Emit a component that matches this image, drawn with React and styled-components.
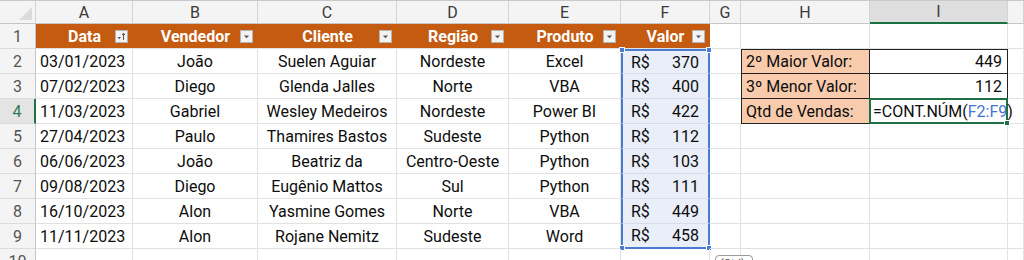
import styled, { createGlobalStyle } from "styled-components";

const GlobalStyle = createGlobalStyle`
  html, body {
    margin: 0;
    padding: 0;
    background: #fff;
    overflow: hidden;
  }
  body {
    font-family: Roboto, "Liberation Sans", Arial, sans-serif;
    font-size: 16px;
    color: #0d0d0d;
  }
`;

const ORANGE = "#c55a11";
const PEACH = "#f8cbad";
const BLUE = "#4a7bcf";
const GREEN = "#1e7145";
const GRID = "#e1e1e1";

const Sheet = styled.div`
  position: relative;
  display: grid;
  grid-template-columns: 36px 97px 125px 139px 112px 112px 89px 31px 129px 138px 16px;
  grid-template-rows: 23px repeat(10, 25px);
  width: 1024px;
  height: 260px;
  overflow: hidden;
  border-top: 1px solid #c9c9c9;
  box-sizing: border-box;
`;

const Corner = styled.div`
  position: relative;
  background: #f4f4f4;
  border-right: 1px solid #d4d4d4;
  border-bottom: 1px solid #c6c6c6;
  &::after {
    content: "";
    position: absolute;
    right: 3px;
    bottom: 3px;
    border-left: 13px solid transparent;
    border-bottom: 13px solid #dcdcdc;
  }
`;

const ColHead = styled.div`
  display: flex;
  align-items: center;
  justify-content: center;
  background: ${({ $active }) => ($active ? "#dedede" : "#f4f4f4")};
  color: #3a3a3a;
  font-size: 16px;
  border-right: 1px solid #d4d4d4;
  border-bottom: ${({ $active }) => ($active ? `2px solid ${GREEN}` : "1px solid #c6c6c6")};
  box-sizing: border-box;
`;

const RowHead = styled.div`
  display: flex;
  align-items: center;
  justify-content: center;
  background: ${({ $active }) => ($active ? "#e4e4e4" : "#f4f4f4")};
  color: ${({ $active }) => ($active ? "#2f7a50" : "#555")};
  font-size: 16px;
  border-bottom: 1px solid #dcdcdc;
  border-right: ${({ $active }) => ($active ? `2px solid ${GREEN}` : "1px solid #c6c6c6")};
  box-sizing: border-box;
`;

const Cell = styled.div`
  position: relative;
  display: flex;
  align-items: center;
  justify-content: ${({ $align }) => $align || "center"};
  padding: 0 4px;
  white-space: nowrap;
  border-right: ${({ $open }) => ($open ? "none" : `1px solid ${GRID}`)};
  border-bottom: 1px solid ${GRID};
  box-sizing: border-box;
`;

const HeadCell = styled.div`
  display: grid;
  grid-template-columns: 18px 1fr 18px;
  align-items: center;
  background: ${ORANGE};
  color: #fff;
  font-weight: 700;
  border-bottom: 1px solid ${GRID};
  box-sizing: border-box;
`;

const HeadLabel = styled.span`
  text-align: center;
  white-space: nowrap;
`;

const FilterBtn = styled.span`
  width: 13px;
  height: 13px;
  display: flex;
  align-items: center;
  justify-content: center;
  background: #f3f3f3;
  border: 1px solid #b5b5b5;
  box-sizing: border-box;
`;

const ValueCell = styled.div`
  position: relative;
  display: flex;
  align-items: center;
  justify-content: space-between;
  padding: 0 9px 0 8px;
  background: #e9eef8;
  border-left: 2px solid ${BLUE};
  border-right: 2px solid ${BLUE};
  border-top: ${({ $first }) => ($first ? `2px solid ${BLUE}` : "none")};
  border-bottom: ${({ $last }) => ($last ? `2px solid ${BLUE}` : "1px solid #d7dde8")};
  box-sizing: border-box;
`;

const Handle = styled.span`
  position: absolute;
  width: 6px;
  height: 6px;
  background: ${({ $color }) => $color};
  border: 1px solid #fff;
  box-sizing: border-box;
  ${({ $top }) => ($top ? "top: -4px;" : "bottom: -4px;")}
  ${({ $left }) => ($left ? "left: -4px;" : "right: -4px;")}
`;

const LabelCell = styled.div`
  display: flex;
  align-items: center;
  padding: 0 4px;
  background: ${PEACH};
  white-space: nowrap;
  border-left: 1px solid #222;
  border-right: 1px solid #222;
  border-bottom: 1px solid #222;
  border-top: ${({ $first }) => ($first ? "1px solid #222" : "none")};
  box-sizing: border-box;
`;

const ResultCell = styled.div`
  display: flex;
  align-items: center;
  justify-content: flex-end;
  padding: 0 5px;
  border-right: 1px solid #222;
  border-bottom: 1px solid #222;
  border-top: ${({ $first }) => ($first ? "1px solid #222" : "none")};
  box-sizing: border-box;
`;

const ActiveCell = styled.div`
  position: relative;
  z-index: 2;
  display: flex;
  align-items: center;
  padding: 0 2px;
  white-space: nowrap;
  border: 2px solid ${GREEN};
  margin: -1px 0 0 -1px;
  box-sizing: border-box;
`;

const Ref = styled.span`
  color: #3f77d0;
`;

const Tooltip = styled.div`
  position: absolute;
  left: 715px;
  top: 254px;
  width: 38px;
  height: 14px;
  padding: 1px 4px;
  font-size: 11px;
  color: #444;
  background: #fff;
  border: 1px solid #9a9a9a;
  border-radius: 4px;
  box-sizing: border-box;
  overflow: hidden;
`;

const cols = ["A", "B", "C", "D", "E", "F", "G", "H", "I", ""];
const headers = ["Data", "Vendedor", "Cliente", "Região", "Produto", "Valor"];

const rows = [
  ["03/01/2023", "João", "Suelen Aguiar", "Nordeste", "Excel", 370],
  ["07/02/2023", "Diego", "Glenda Jalles", "Norte", "VBA", 400],
  ["11/03/2023", "Gabriel", "Wesley Medeiros", "Nordeste", "Power BI", 422],
  ["27/04/2023", "Paulo", "Thamires Bastos", "Sudeste", "Python", 112],
  ["06/06/2023", "João", "Beatriz da", "Centro-Oeste", "Python", 103],
  ["09/08/2023", "Diego", "Eugênio Mattos", "Sul", "Python", 111],
  ["16/10/2023", "Alon", "Yasmine Gomes", "Norte", "VBA", 449],
  ["11/11/2023", "Alon", "Rojane Nemitz", "Sudeste", "Word", 458],
];

const side = [
  ["2º Maior Valor:", "449"],
  ["3º Menor Valor:", "112"],
];

function DropIcon({ sort }) {
  return (
    <svg width="9" height="9" viewBox="0 0 9 9">
      {sort ? (
        <>
          <path d="M0.5 5 L4 5 L2.25 7.2 Z" fill="#555" />
          <path d="M6.5 8 L6.5 1.5 M5 3 L6.5 1.2 L8 3" stroke="#555" strokeWidth="1" fill="none" />
        </>
      ) : (
        <path d="M2 3.5 L7 3.5 L4.5 6.3 Z" fill="#555" />
      )}
    </svg>
  );
}

function Extra({ row }) {
  // columns G..J for a body row (row index 2..10)
  if (row === 2 || row === 3) {
    const [label, value] = side[row - 2];
    return (
      <>
        <Cell $open />
        <LabelCell $first={row === 2}>{label}</LabelCell>
        <ResultCell $first={row === 2}>{value}</ResultCell>
        <Cell />
      </>
    );
  }
  if (row === 4) {
    return (
      <>
        <Cell $open />
        <LabelCell>Qtd de Vendas:</LabelCell>
        <ActiveCell>
          =CONT.NÚM(<Ref>F2:F9</Ref>)
          <Handle $color={GREEN} />
        </ActiveCell>
        <Cell />
      </>
    );
  }
  return (
    <>
      <Cell />
      <Cell />
      <Cell />
      <Cell />
    </>
  );
}

export default function App() {
  return (
    <>
      <GlobalStyle />
      <Sheet>
        <Corner />
        {cols.map((c, i) => (
          <ColHead key={i} $active={c === "I"}>
            {c}
          </ColHead>
        ))}

        <RowHead>1</RowHead>
        {headers.map((h, i) => (
          <HeadCell key={h}>
            <span />
            <HeadLabel>{h}</HeadLabel>
            <FilterBtn>
              <DropIcon sort={i === 0} />
            </FilterBtn>
          </HeadCell>
        ))}
        <Cell />
        <Cell />
        <Cell />
        <Cell />

        {rows.map((r, i) => {
          const n = i + 2;
          return [
            <RowHead key={`h${n}`} $active={n === 4}>
              {n}
            </RowHead>,
            <Cell key={`a${n}`} $align="flex-start">
              {r[0]}
            </Cell>,
            <Cell key={`b${n}`}>{r[1]}</Cell>,
            <Cell key={`c${n}`}>{r[2]}</Cell>,
            <Cell key={`d${n}`}>{r[3]}</Cell>,
            <Cell key={`e${n}`}>{r[4]}</Cell>,
            <ValueCell key={`f${n}`} $first={i === 0} $last={i === rows.length - 1}>
              <span>R$</span>
              <span>{r[5]}</span>
              {i === 0 && <Handle $color={BLUE} $top $left />}
              {i === 0 && <Handle $color={BLUE} $top />}
              {i === rows.length - 1 && <Handle $color={BLUE} $left />}
              {i === rows.length - 1 && <Handle $color={BLUE} />}
            </ValueCell>,
            <Extra key={`x${n}`} row={n} />,
          ];
        })}

        <RowHead>10</RowHead>
        {Array.from({ length: 10 }).map((_, i) => (
          <Cell key={i} />
        ))}
        <Tooltip>(Ctrl)</Tooltip>
      </Sheet>
    </>
  );
}
